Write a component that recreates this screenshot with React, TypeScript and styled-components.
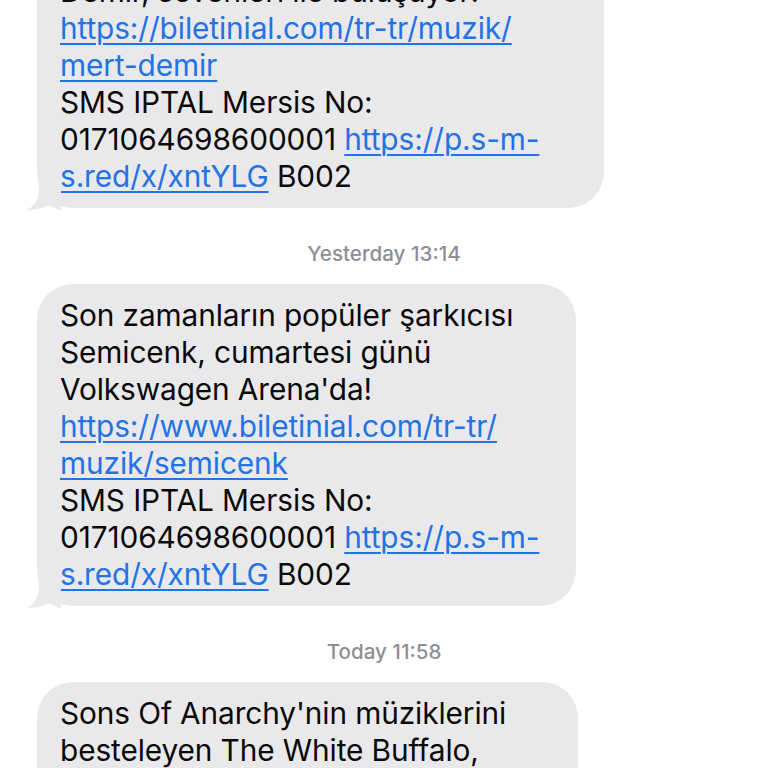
import React from 'react'
import styled, { createGlobalStyle } from 'styled-components'

const Colors = {
  White: '#ffffff',
  Bubble: '#e9e9eb',
  Text: '#0a0a0a',
  Link: '#2273e6',
  Meta: '#8e8e93',
}

const GlobalStyle = createGlobalStyle`
  html, body {
    margin: 0;
    padding: 0;
    background: ${Colors.White};
  }
  body {
    font-family: Inter, 'Liberation Sans', Arial, sans-serif;
  }
`

const Screen = styled.div`
  width: 768px;
  height: 768px;
  overflow: hidden;
  background: ${Colors.White};
`

const Thread = styled.div`
  display: flex;
  flex-direction: column;
  align-items: flex-start;
  margin-top: -40px;
  padding-left: 37px;
`

const BubbleWrap = styled.div`
  position: relative;
`

const Bubble = styled.div<{ $minWidth?: number }>`
  background-color: ${Colors.Bubble};
  border-radius: 36px;
  padding: 13px 24px 13px 23px;
  min-width: ${p => (p.$minWidth ? `${p.$minWidth}px` : 'auto')};
  box-sizing: border-box;
  color: ${Colors.Text};
  font-size: 29.8px;
  letter-spacing: -0.1px;
  line-height: 37px;
  white-space: nowrap;
`

const Link = styled.a`
  color: ${Colors.Link};
  text-decoration: underline;
  text-decoration-thickness: 1.5px;
  text-underline-offset: 4px;
`

const Tail = styled.svg`
  position: absolute;
  left: -10px;
  bottom: -3px;
  width: 34px;
  height: 30px;
`

const Stamp = styled.div`
  align-self: stretch;
  margin-left: -37px;
  text-align: center;
  color: ${Colors.Meta};
  font-size: 20.6px;
  font-weight: 500;
  line-height: 22px;
  padding: 35px 0 19px;
`

const BubbleTail = () => (
  <Tail viewBox="0 0 34 30">
    <path
      d="M34 0 L34 30 L22 24 C16 27 8 29 0 29 C6 26 11 20 12 10 L12 0 Z"
      fill={Colors.Bubble}
    />
  </Tail>
)

interface MessageProps {
  minWidth?: number
  children: React.ReactNode
}

const Message = ({ minWidth, children }: MessageProps) => (
  <BubbleWrap>
    <Bubble $minWidth={minWidth}>{children}</Bubble>
    <BubbleTail />
  </BubbleWrap>
)

export default function App() {
  return (
    <Screen>
      <GlobalStyle />
      <Thread>
        <Message minWidth={567}>
          Demir, sevenleri ile buluşuyor!
          <br />
          <Link>https://biletinial.com/tr-tr/muzik/</Link>
          <br />
          <Link>mert-demir</Link>
          <br />
          SMS IPTAL Mersis No:
          <br />
          0171064698600001 <Link>https://p.s-m-</Link>
          <br />
          <Link>s.red/x/xntYLG</Link> B002
        </Message>
        <Stamp>Yesterday 13:14</Stamp>
        <Message minWidth={539}>
          Son zamanların popüler şarkıcısı
          <br />
          Semicenk, cumartesi günü
          <br />
          Volkswagen Arena'da!
          <br />
          <Link>https://www.biletinial.com/tr-tr/</Link>
          <br />
          <Link>muzik/semicenk</Link>
          <br />
          SMS IPTAL Mersis No:
          <br />
          0171064698600001 <Link>https://p.s-m-</Link>
          <br />
          <Link>s.red/x/xntYLG</Link> B002
        </Message>
        <Stamp>Today 11:58</Stamp>
        <Message minWidth={541}>
          Sons Of Anarchy'nin müziklerini
          <br />
          besteleyen The White Buffalo,
          <br />
          İstanbul'da!
        </Message>
      </Thread>
    </Screen>
  )
}
